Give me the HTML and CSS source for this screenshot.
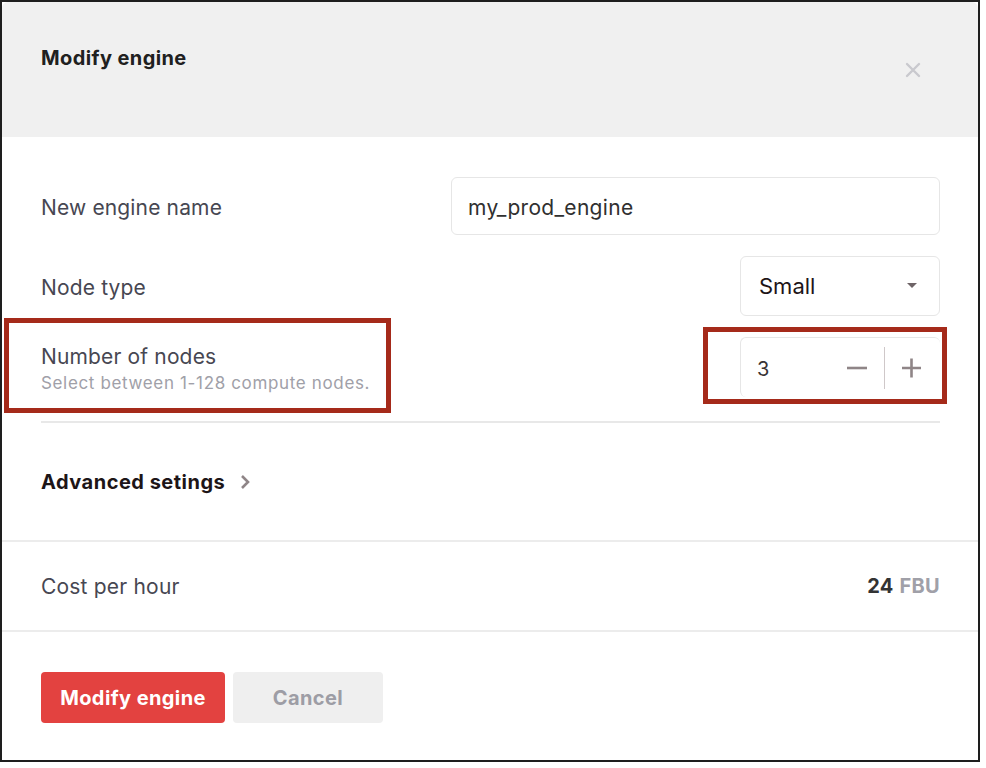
FILE: index.html
```html
<!DOCTYPE html>
<html>
<head>
<meta charset="utf-8">
<link rel="stylesheet" href="styles.css">
</head>
<body>
<div class="frame">
  <div class="modal">
    <header class="modal-header">
      <h1 class="title">Modify engine</h1>
      <span class="close">
        <svg width="16" height="16" viewBox="0 0 16 16"><path d="M2 2 L14 14 M14 2 L2 14" stroke="#c9c9ce" stroke-width="2.4" stroke-linecap="round"/></svg>
      </span>
    </header>
    <section class="fields">
      <div class="row">
        <div class="label">New engine name</div>
        <div class="input wide">my_prod_engine</div>
      </div>
      <div class="row">
        <div class="label">Node type</div>
        <div class="input select">
          <span>Small</span>
          <svg class="caret" width="10" height="6" viewBox="0 0 10 6"><path d="M0 0 L10 0 L5 5 Z" fill="#6e6467"/></svg>
        </div>
      </div>
      <div class="row">
        <div class="label-group">
          <div class="label">Number of nodes</div>
          <div class="hint">Select between 1-128 compute nodes.</div>
        </div>
        <div class="input stepper">
          <span class="value">3</span>
          <span class="step minus"><svg width="22" height="22" viewBox="0 0 22 22"><path d="M1 11 H21" stroke="#8f8587" stroke-width="2.6"/></svg></span>
          <span class="sep"></span>
          <span class="step plus"><svg width="22" height="22" viewBox="0 0 22 22"><path d="M1 11 H20 M10.5 1.5 V20.5" stroke="#8f8587" stroke-width="2.6"/></svg></span>
        </div>
      </div>
      <div class="divider"></div>
    </section>
    <section class="advanced">
      <span class="adv-text">Advanced setings</span>
      <svg class="chev" width="10" height="16" viewBox="0 0 10 16"><path d="M2 2 L8 8 L2 14" fill="none" stroke="#8f8587" stroke-width="2.6"/></svg>
    </section>
    <section class="cost">
      <span class="cost-label">Cost per hour</span>
      <span class="cost-value"><b>24</b> <span class="unit">FBU</span></span>
    </section>
    <footer class="footer">
      <button class="btn primary">Modify engine</button>
      <button class="btn secondary">Cancel</button>
    </footer>
  </div>
  <div class="annot annot-left"></div>
  <div class="annot annot-right"></div>
</div>
</body>
</html>
```
FILE: styles.css
```css
* { box-sizing: border-box; }
html, body { margin: 0; padding: 0; background: #fff; }
body { font-family: Inter, "Noto Sans", sans-serif; }

.frame {
  position: relative;
  width: 980px;
  height: 762px;
  border: 2px solid #1e1e1e;
  overflow: hidden;
}
.modal {
  display: flex;
  flex-direction: column;
  height: 100%;
  background: #fff;
  border-radius: 6px 6px 0 0;
}
.modal-header {
  height: 135px;
  background: #f0f0f0;
  display: flex;
  justify-content: space-between;
  align-items: flex-start;
  padding: 43px 57px 0 39px;
  border-radius: 6px 6px 0 0;
}
.title {
  margin: 0;
  font-size: 20px;
  line-height: 26px;
  font-weight: 700;
  color: #202020;
  letter-spacing: 0.4px;
}
.close { margin-top: 17px; display: flex; }

.fields { padding: 40px 38px 0 39px; }
.row {
  display: flex;
  justify-content: space-between;
  align-items: center;
  margin-bottom: 21px;
}
.row:nth-child(3) { margin-bottom: 0; }
.label {
  font-size: 21px;
  line-height: 26px;
  color: #474752;
  letter-spacing: 0.15px;
  padding-top: 3px;
}
.label-group { padding-top: 4px; }
.label-group .label { padding-top: 0; }
.hint {
  font-size: 17px;
  line-height: 22px;
  color: #a0a0a8;
  margin-top: 2px;
  letter-spacing: 0.65px;
}
.input {
  height: 58px;
  border: 1px solid #e6e6e6;
  border-radius: 6px;
  background: #fff;
  display: flex;
  align-items: center;
  padding: 2px 16px 0 16px;
  font-size: 21px;
  letter-spacing: 0.3px;
  color: #303030;
}
.wide { width: 489px; }
.select {
  width: 200px;
  height: 60px;
  justify-content: space-between;
  padding: 0 22px 0 18px;
  font-size: 22px;
  letter-spacing: 0;
  color: #1d1517;
}
.stepper {
  width: 200px;
  height: 60px;
  padding: 0 0 0 16px;
  border-right: none;
  border-bottom: none;
}
.stepper .value { flex: 1; color: #3a3435; font-size: 20px; padding-top: 2px; }
.step { display: flex; width: 22px; }
.minus { margin-right: 16px; }
.sep { width: 1px; height: 42px; background: #cfc8c9; margin-right: 16px; }
.plus { margin-right: 17px; }

.divider {
  height: 2px;
  background: #e8e8e8;
  margin-top: 24px;
}
.advanced {
  height: 119px;
  padding: 0 39px;
  display: flex;
  align-items: center;
  gap: 15px;
  border-bottom: 2px solid #ececec;
}
.adv-text {
  font-size: 20px;
  font-weight: 700;
  color: #1d1517;
  letter-spacing: 0.5px;
  padding-top: 1px;
}
.chev { margin-top: 1px; }
.cost {
  height: 90px;
  padding: 0 38px 0 39px;
  display: flex;
  align-items: center;
  justify-content: space-between;
  border-bottom: 2px solid #ececec;
}
.cost-label { font-size: 21px; color: #474752; letter-spacing: 0.2px; }
.cost-value { font-size: 20px; letter-spacing: 0.3px; }
.cost-value b { color: #333; font-weight: 700; }
.unit { color: #a0a0a8; font-weight: 700; }

.footer {
  padding: 40px 39px 0 39px;
  display: flex;
  gap: 8px;
}
.btn {
  font-family: Inter, "Noto Sans", sans-serif;
  height: 51px;
  border: none;
  border-radius: 4px;
  font-size: 20px;
  font-weight: 700;
  letter-spacing: 0.4px;
  padding: 0;
}
.primary { width: 184px; background: #e34240; color: #fff; }
.secondary { width: 150px; background: #efefef; color: #9d9da5; }

.annot {
  position: absolute;
  border: 5px solid #a52a1a;
  pointer-events: none;
}
.annot-left { left: 2px; top: 316px; width: 387px; height: 95px; }
.annot-right { left: 701px; top: 325px; width: 244px; height: 77px; }
```
